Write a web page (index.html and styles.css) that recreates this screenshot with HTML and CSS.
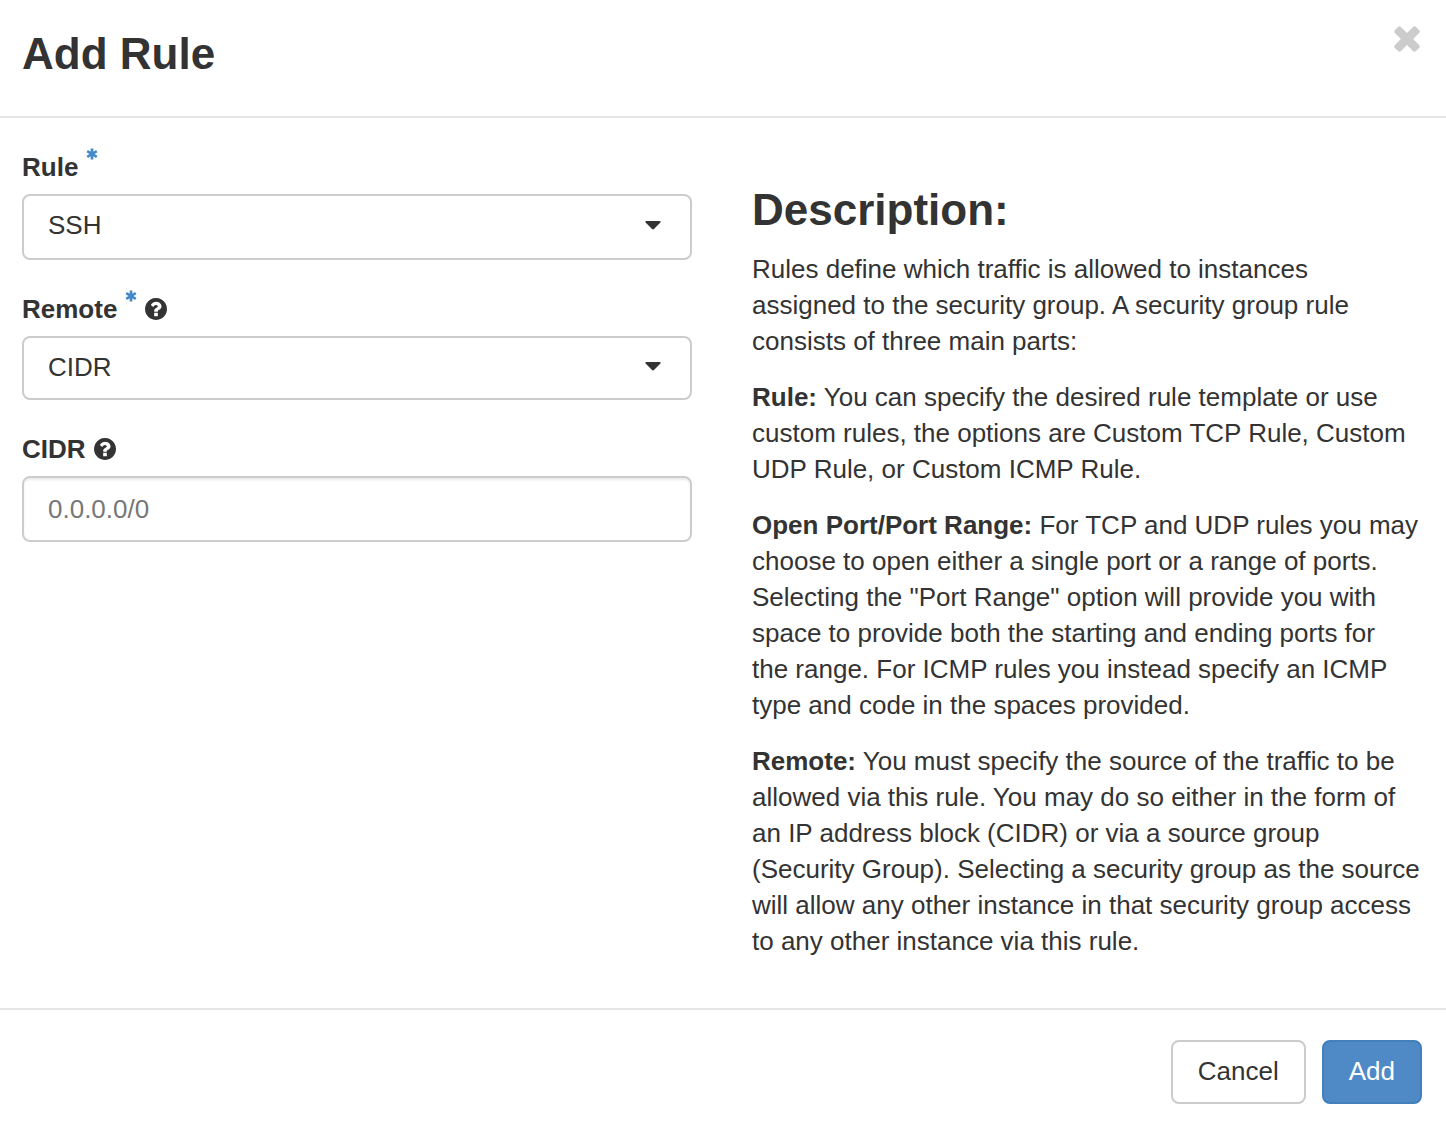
FILE: index.html
```html
<!DOCTYPE html>
<html lang="en">
<head>
<meta charset="utf-8">
<meta name="viewport" content="width=device-width, initial-scale=1">
<title>Add Rule</title>
<link rel="stylesheet" href="styles.css">
</head>
<body>
<svg class="sprite" aria-hidden="true">
  <symbol id="icon-times" viewBox="0 0 26 26">
    <path fill="currentColor" d="M4 .9Q5.500-.4 7 .9L13 6.900 19 .9Q20.500-.4 22 .9L25.100 4Q26.400 5.500 25.100 7L19.100 13 25.100 19Q26.400 20.500 25.100 22L22 25.100Q20.500 26.400 19 25.100L13 19.100 7 25.100Q5.500 26.400 4 25.100L.9 22Q-.4 20.500.9 19L6.900 13 .9 7Q-.4 5.500.9 4z"/>
  </symbol>
  <symbol id="icon-asterisk" viewBox="0 0 12 12">
    <path d="M6 .4V11.600M1.200 3.200 10.800 8.800M10.800 3.200 1.200 8.800" fill="none" stroke="currentColor" stroke-width="2.700" stroke-linecap="butt"/>
  </symbol>
  <symbol id="icon-help" viewBox="0 0 1536 1536">
    <path fill="currentColor" d="M896 1248v-192q0-14-9-23t-23-9H672q-14 0-23 9t-9 23v192q0 14 9 23t23 9h192q14 0 23-9t9-23zm256-672q0-88-55.500-163T958 297t-170-41q-243 0-371 213-15 24 8 42l132 100q7 6 19 6 16 0 25-12 53-68 86-92 34-24 86-24 48 0 85.500 26t37.500 59q0 38-20 61t-68 45q-63 28-115.500 86.500T640 892v36q0 14 9 23t23 9h192q14 0 23-9t9-23q0-19 21.500-49.500T972 829q32-18 49-28.500t46-35 44.500-48 28-60.500 12.500-81zm384 192q0 209-103 385.500T1153.500 1433 768 1536t-385.500-103T103 1153.500 0 768t103-385.500T382.500 103 768 0t385.500 103T1433 382.500 1536 768z"/>
  </symbol>
  <symbol id="icon-caret" viewBox="0 0 16 9">
    <path fill="currentColor" d="M1 0h14q1.200.6.400 1.400L9 8q-1 .9-2 0L.6 1.400Q-.2.6 1 0z"/>
  </symbol>
</svg>
<form class="modal">
  <header class="modal-header">
    <h1 class="title">Add Rule</h1>
    <button class="close" type="button" aria-label="Close"><svg class="close-icon"><use href="#icon-times"/></svg></button>
  </header>
  <main class="modal-body">
    <div class="fields">
      <div class="field">
        <div class="label-row">
          <label for="rule">Rule</label>
          <svg class="required"><use href="#icon-asterisk"/></svg>
        </div>
        <div class="select-wrap">
          <select class="control" id="rule" required><option>SSH</option></select>
          <svg class="caret"><use href="#icon-caret"/></svg>
        </div>
      </div>
      <div class="field">
        <div class="label-row">
          <label for="remote">Remote</label>
          <svg class="required"><use href="#icon-asterisk"/></svg>
          <svg class="help"><use href="#icon-help"/></svg>
        </div>
        <div class="select-wrap">
          <select class="control control-short" id="remote" required><option>CIDR</option></select>
          <svg class="caret"><use href="#icon-caret"/></svg>
        </div>
      </div>
      <div class="field">
        <div class="label-row">
          <label for="cidr">CIDR</label>
          <svg class="help"><use href="#icon-help"/></svg>
        </div>
        <input class="control control-text" id="cidr" type="text" placeholder="0.0.0.0/0">
      </div>
    </div>
    <section class="description">
      <h2 class="title">Description:</h2>
      <p>Rules define which traffic is allowed to instances<br>assigned to the security group. A security group rule<br>consists of three main parts:</p>
      <p><strong>Rule:</strong> You can specify the desired rule template or use<br>custom rules, the options are Custom TCP Rule, Custom<br>UDP Rule, or Custom ICMP Rule.</p>
      <p><strong>Open Port/Port Range:</strong> For TCP and UDP rules you may<br>choose to open either a single port or a range of ports.<br>Selecting the "Port Range" option will provide you with<br>space to provide both the starting and ending ports for<br>the range. For ICMP rules you instead specify an ICMP<br>type and code in the spaces provided.</p>
      <p><strong>Remote:</strong> You must specify the source of the traffic to be<br>allowed via this rule. You may do so either in the form of<br>an IP address block (CIDR) or via a source group<br>(Security Group). Selecting a security group as the source<br>will allow any other instance in that security group access<br>to any other instance via this rule.</p>
    </section>
  </main>
  <footer class="modal-footer">
    <button class="btn" type="button">Cancel</button>
    <button class="btn btn-primary" type="submit">Add</button>
  </footer>
</form>
</body>
</html>
```
FILE: styles.css
```css
* {
  box-sizing: border-box;
}

body {
  margin: 0;
  background: #fff;
  color: #333;
  font: 26px/36px "Helvetica Neue", "Liberation Sans", Arial, sans-serif;
}

.sprite {
  position: absolute;
  width: 0;
  height: 0;
}

.modal-header {
  display: flex;
  justify-content: space-between;
  align-items: flex-start;
  padding: 26px 26px 34px 22px;
  border-bottom: 2px solid #e5e5e5;
}

.title {
  margin: 0;
  font-size: 44px;
  line-height: 56px;
  font-weight: 700;
}

.close {
  display: flex;
  padding: 0;
  border: 0;
  background: none;
  color: #ccc;
  cursor: pointer;
}

.close-icon {
  width: 26px;
  height: 26px;
}

.modal-body {
  display: grid;
  grid-template-columns: 1fr 1fr;
  gap: 60px;
  padding: 30px 24px 49px 22px;
}

.fields {
  display: flex;
  flex-direction: column;
  gap: 30px;
}

.field {
  display: flex;
  flex-direction: column;
  gap: 8px;
}

.label-row {
  display: flex;
  align-items: center;
  gap: 8px;
  height: 38px;
  font-weight: 700;
}

.required {
  align-self: flex-start;
  width: 12px;
  height: 12px;
  color: #428bca;
}

.help {
  width: 22px;
  height: 22px;
}

.select-wrap {
  display: grid;
  align-items: center;
}

.select-wrap > * {
  grid-area: 1 / 1;
}

.control {
  width: 100%;
  height: 66px;
  padding: 0 24px 4px;
  border: 2px solid #ccc;
  border-radius: 8px;
  background: #fff;
  color: #333;
  font: inherit;
  appearance: none;
}

.control-short {
  height: 64px;
  padding-bottom: 2px;
}

.control-text {
  padding-bottom: 0;
  box-shadow: inset 0 2px 2px rgba(0, 0, 0, 0.075);
}

.control-text::placeholder {
  color: #777;
}

.caret {
  justify-self: end;
  width: 16px;
  height: 9px;
  margin: 0 31px 3px 0;
  pointer-events: none;
}

.description {
  padding-top: 34px;
}

.description p {
  margin: 0 0 20px;
}

.description .title {
  margin-bottom: 13px;
}

.description p:last-child {
  margin-bottom: 0;
}

.modal-footer {
  display: flex;
  justify-content: flex-end;
  gap: 16px;
  padding: 30px 24px 24px;
  border-top: 2px solid #e5e5e5;
}

.btn {
  height: 64px;
  padding: 0 25px 2px;
  border: 2px solid #ccc;
  border-radius: 8px;
  background: #fff;
  color: #333;
  font: inherit;
  cursor: pointer;
}

.btn-primary {
  border-color: #427fbd;
  background: #4f8ac6;
  color: #fff;
}
```
